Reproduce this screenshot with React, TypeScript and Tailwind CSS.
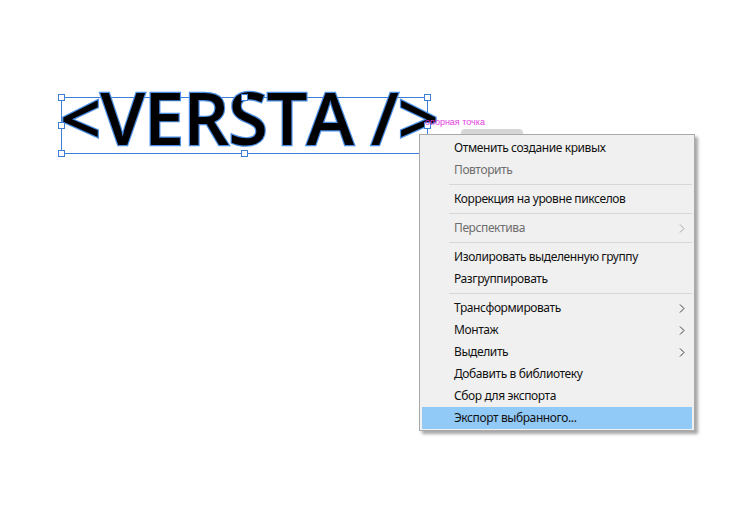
import React from 'react'

type Item =
  | { sep: true }
  | { label: string; disabled?: boolean; sub?: boolean; active?: boolean; sep?: false }

const items: Item[] = [
  { label: 'Отменить создание кривых' },
  { label: 'Повторить', disabled: true },
  { sep: true },
  { label: 'Коррекция на уровне пикселов' },
  { sep: true },
  { label: 'Перспектива', disabled: true, sub: true },
  { sep: true },
  { label: 'Изолировать выделенную группу' },
  { label: 'Разгруппировать' },
  { sep: true },
  { label: 'Трансформировать', sub: true },
  { label: 'Монтаж', sub: true },
  { label: 'Выделить', sub: true },
  { label: 'Добавить в библиотеку' },
  { label: 'Сбор для экспорта' },
  { label: 'Экспорт выбранного...', active: true },
]

function Arrow({ disabled }: { disabled?: boolean }) {
  return (
    <svg width="6" height="9" viewBox="0 0 6 9" fill="none">
      <path d="M1 0.5 L5 4.5 L1 8.5" stroke={disabled ? '#a8a8a8' : '#3c3c3c'} strokeWidth="1" />
    </svg>
  )
}

function Handle({ className }: { className: string }) {
  return <div className={`absolute w-[7px] h-[7px] bg-white border border-[#3d7fd6] ${className}`} />
}

export default function App() {
  return (
    <div className="relative w-[743px] h-[506px] bg-white overflow-hidden font-['Noto_Sans',sans-serif]">
      {/* selected object on the artboard */}
      <div className="absolute left-[61px] top-[97px] w-[367px] h-[57px] border border-[#3d7fd6]">
        <div
          className="absolute left-[-2px] top-[-17px] whitespace-nowrap font-['Open_Sans',sans-serif] font-semibold text-[72px] leading-none text-black tracking-[-1px]"
          style={{ WebkitTextStroke: '2.4px #4a8ee6', paintOrder: 'stroke fill' }}
        >
          {'<VERSTA />'}
        </div>
        <Handle className="left-[-4px] top-[-4px]" />
        <Handle className="left-[179px] top-[-4px]" />
        <Handle className="right-[-4px] top-[-4px]" />
        <Handle className="left-[-4px] top-[24px]" />
        <Handle className="right-[-4px] top-[24px]" />
        <Handle className="left-[-4px] bottom-[-4px]" />
        <Handle className="left-[179px] bottom-[-4px]" />
        <Handle className="right-[-4px] bottom-[-4px]" />
      </div>

      <div className="absolute left-[425px] top-[118px] text-[9px] leading-none text-[#e23ee0] font-['Liberation_Sans',sans-serif]">
        опорная точка
      </div>

      {/* small tab peeking above menu */}
      <div className="absolute left-[461px] top-[129px] w-[62px] h-[8px] rounded-t-[4px] bg-[#d6d6d6]" />

      {/* context menu */}
      <div className="absolute left-[419px] top-[134px] w-[276px] bg-[#f0f0f0] border border-[#a9a9a9] px-[2px] pt-[2px] pb-[1px] shadow-[3px_3px_3px_rgba(0,0,0,0.35)] text-[12px] tracking-[-0.4px]">
        {items.map((it, i) =>
          it.sep ? (
            <div key={i} className="h-[7px] flex items-center pl-[27px]">
              <div className="h-px w-full bg-[#d7d7d7]" />
            </div>
          ) : (
            <div
              key={i}
              className={`h-[22px] flex items-center justify-between pl-[32px] pr-[7px] ${
                it.active ? 'bg-[#91c9f7]' : ''
              } ${it.disabled ? 'text-[#6d6d6d]' : 'text-[#111]'}`}
            >
              <span>{it.label}</span>
              {it.sub && <Arrow disabled={it.disabled} />}
            </div>
          )
        )}
      </div>
    </div>
  )
}
